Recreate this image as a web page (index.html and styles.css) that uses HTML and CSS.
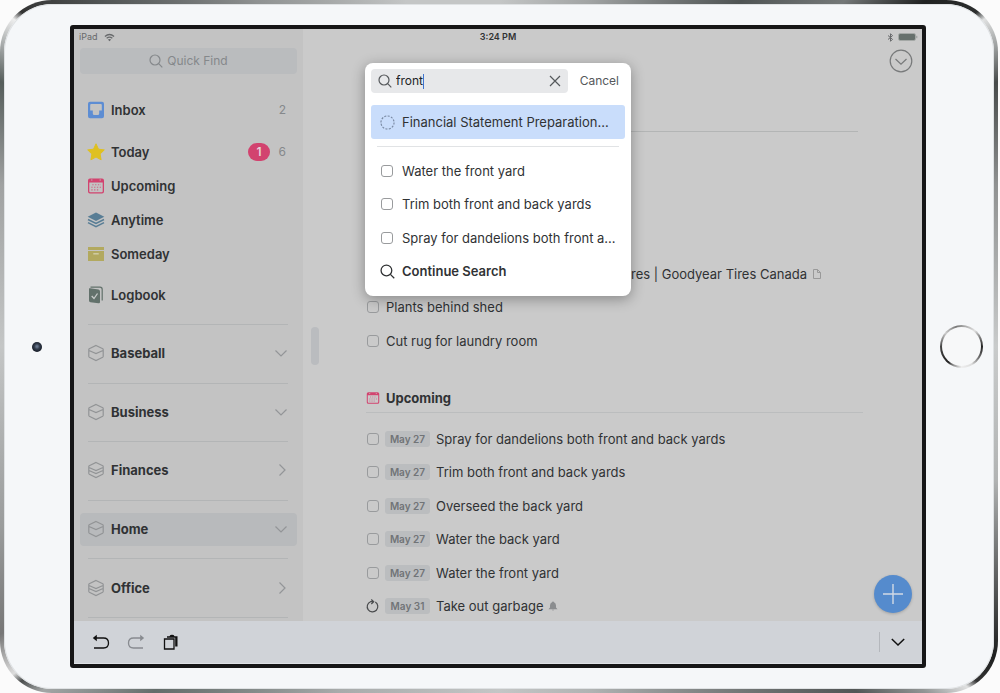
FILE: index.html
```html
<!DOCTYPE html>
<html lang="en">
<head>
<meta charset="utf-8">
<title>Quick Find</title>
<link rel="stylesheet" href="styles.css">
</head>
<body>
<svg class="defs" aria-hidden="true">
  <symbol id="search" viewBox="0 0 14 14"><circle cx="6" cy="6" r="5"/><path d="M9.7 9.7L13.3 13.3"/></symbol>
  <symbol id="down" viewBox="0 0 14 14"><path d="M1.5 4.5L7 10L12.500 4.500"/></symbol>
  <symbol id="right" viewBox="0 0 14 14"><path d="M5.500 1.500L11 7L5.500 12.500"/></symbol>
  <symbol id="area" viewBox="0 0 18 18"><path d="M9 1.500L15.800 4.800Q16.200 5 16.200 5.500V12.300Q16.200 12.900 15.700 13.200L9 16.500L2.300 13.200Q1.800 12.900 1.800 12.300V5.500Q1.800 5 2.200 4.800ZM2 6.500L9 9.500L16 6.500"/></symbol>
  <symbol id="area-full" viewBox="0 0 18 18"><path d="M9 1.500L15.800 4.800Q16.200 5 16.200 5.500V12.300Q16.200 12.900 15.700 13.200L9 16.500L2.300 13.200Q1.800 12.900 1.800 12.300V5.500Q1.800 5 2.200 4.800ZM2 6.500L9 9.500L16 6.500M2 9.500L9 12.500L16 9.500"/></symbol>
  <symbol id="calendar" viewBox="0 0 18 18"><path fill="currentColor" fill-rule="evenodd" d="M3 1.500H15Q17 1.500 17 3.500V14.500Q17 16.500 15 16.500H3Q1 16.500 1 14.500V3.500Q1 1.500 3 1.500ZM2.300 5.500V14.300Q2.300 15.200 3.200 15.200H14.800Q15.700 15.200 15.700 14.300V5.500ZM4.200 2.500V3.600H5.400V2.500ZM12.600 2.500V3.600H13.800V2.500Z"/><path stroke="currentColor" stroke-opacity=".75" stroke-width="1.100" stroke-dasharray="1.300 1.500" d="M5.300 7.700H14M4.300 10.300H14M4.300 12.900H11.500"/></symbol>
</svg>
<div class="device">
  <div class="face">
    <div class="bezel-left"><span class="camera"></span></div>
    <div class="screen">
      <div class="content">
        <nav class="sidebar">
          <div class="status">iPad
            <svg class="wifi" viewBox="0 0 12 9"><path d="M1 3.300Q6 -.8 11 3.300M2.900 5.300Q6 2.800 9.100 5.300" fill="none" stroke="currentColor" stroke-width="1.400"/><path d="M4.200 6.700Q6 5.300 7.800 6.700L6 8.600Z" fill="currentColor"/></svg>
          </div>
          <button class="quick-find"><svg class="icon"><use href="#search"/></svg>Quick Find</button>
          <ul class="lists">
            <li class="entry spaced">
              <svg class="list-icon" viewBox="0 0 18 18"><path fill="#5d8dd3" fill-rule="evenodd" d="M3 .8H15Q17 .8 17 2.800V15.200Q17 17.200 15 17.200H3Q1 17.200 1 15.200V2.800Q1 .8 3 .8ZM3.200 4V9.600H5.800V12.500Q5.800 14 7.300 14H10.700Q12.200 14 12.200 12.500V9.600H14.800V4Q14.800 3 13.800 3H4.200Q3.200 3 3.200 4Z"/></svg>
              <span class="name">Inbox</span><span class="count">2</span></li>
            <li class="entry">
              <svg class="list-icon" viewBox="0 0 18 18"><path fill="#dfc021" stroke="#dfc021" stroke-linejoin="round" d="M9 .8L11.500 6.200L17.300 6.900L13.100 11L14.100 16.800L9 14L3.900 16.800L4.900 11L.7 6.900L6.500 6.200Z"/></svg>
              <span class="name">Today</span><span class="badge">1</span><span class="count">6</span></li>
            <li class="entry"><svg class="list-icon pink"><use href="#calendar"/></svg><span class="name">Upcoming</span></li>
            <li class="entry">
              <svg class="list-icon" viewBox="0 0 18 18"><path fill="#587d95" d="M9 1.500L17.300 5.800L9 10L.7 5.800Z"/><path fill="none" stroke="#587d95" stroke-width="1.500" d="M1 8.500L9 12.500L17 8.500M1 11.700L9 15.700L17 11.700"/></svg>
              <span class="name">Anytime</span></li>
            <li class="entry">
              <svg class="list-icon" viewBox="0 0 18 18"><path fill="#b2a95f" d="M1 2H17V5H1ZM1 6H17V16H1Z"/><path stroke="#d3cfa9" stroke-width="1.400" d="M6.300 8.800H11.700"/></svg>
              <span class="name">Someday</span></li>
            <li class="entry logbook">
              <svg class="list-icon" viewBox="0 0 18 18"><path fill="#62716b" d="M2 2.500Q2 2 3 2.200L11.500 3.600Q13 4 13 5.500V16Q13 17.600 11.500 17.300L3.500 16.200Q2 16 2 14.500Z"/><path fill="none" stroke="#62716b" stroke-width="1.200" d="M3.500 1.200H13Q15.200 1.200 15.200 3.400V14.500"/><path fill="none" stroke="#c8cbca" stroke-width="1.300" d="M4.700 10L7 12.500L10.500 7.500"/></svg>
              <span class="name">Logbook</span></li>
          </ul>
          <ul class="areas">
            <li class="area"><div class="entry"><svg class="list-icon line"><use href="#area"/></svg><span class="name">Baseball</span><svg class="icon chev"><use href="#down"/></svg></div></li>
            <li class="area"><div class="entry"><svg class="list-icon line"><use href="#area"/></svg><span class="name">Business</span><svg class="icon chev"><use href="#down"/></svg></div></li>
            <li class="area"><div class="entry"><svg class="list-icon line"><use href="#area-full"/></svg><span class="name">Finances</span><svg class="icon chev"><use href="#right"/></svg></div></li>
            <li class="area"><div class="entry current"><svg class="list-icon line"><use href="#area"/></svg><span class="name">Home</span><svg class="icon chev"><use href="#down"/></svg></div></li>
            <li class="area"><div class="entry"><svg class="list-icon line"><use href="#area-full"/></svg><span class="name">Office</span><svg class="icon chev"><use href="#right"/></svg></div></li>
          </ul>
        </nav>
        <main class="main">
          <div class="status battery-status">
            <svg class="bluetooth" viewBox="0 0 7 9"><path d="M1 2.500L5.500 6.300L3.500 8.300V.7L5.500 2.700L1 6.500" fill="none" stroke="currentColor"/></svg>
            <svg class="battery" viewBox="0 0 20 8"><rect x=".5" y=".5" width="17" height="7" rx="1.500" fill="none" stroke="#a4a8a6"/><rect x="1" y="1" width="16" height="6" rx="1" fill="#66706c"/><path d="M18.800 2.800V5.200" stroke="#959a98"/></svg>
          </div>
          <button class="more" aria-label="More"><svg viewBox="0 0 24 24"><circle cx="12" cy="12" r="10.800"/><path d="M6.500 10L12 15.200L17.500 10"/></svg></button>
          <div class="page-head"></div>
          <ul class="tasks first">
            <li class="task link-task"><a class="title" href="#tires">Tires | Goodyear Tires Canada</a><svg class="mini" viewBox="0 0 10 12"><path d="M1.500 1.500H5.500L8.500 4.500V10.500H1.500ZM5.500 1.500V4.500H8.500" fill="none" stroke="#999" stroke-linejoin="round"/></svg></li>
            <li class="task"><label><input type="checkbox">Plants behind shed</label></li>
            <li class="task"><label><input type="checkbox">Cut rug for laundry room</label></li>
          </ul>
          <h2 class="section"><svg class="small-cal pink"><use href="#calendar"/></svg>Upcoming</h2>
          <ul class="tasks dated">
            <li class="task"><label><input type="checkbox"><span class="date">May 27</span>Spray for dandelions both front and back yards</label></li>
            <li class="task"><label><input type="checkbox"><span class="date">May 27</span>Trim both front and back yards</label></li>
            <li class="task"><label><input type="checkbox"><span class="date">May 27</span>Overseed the back yard</label></li>
            <li class="task"><label><input type="checkbox"><span class="date">May 27</span>Water the back yard</label></li>
            <li class="task"><label><input type="checkbox"><span class="date">May 27</span>Water the front yard</label></li>
            <li class="task"><svg class="repeat" viewBox="0 0 13 14"><path d="M9.300 3.100A5.300 5.300 0 1 1 4.500 2.700H7.500M5.300 .5L7.700 2.700L5.300 5" fill="none" stroke="#4a4c4e" stroke-width="1.200"/></svg><span class="date">May 31</span>Take out garbage<svg class="mini bell" viewBox="0 0 10 12"><path fill="#8b8d8f" d="M5 1.500Q6 1.500 6 2.300Q8 3 8 5.500V7.500L9.500 9.200H.5L2 7.500V5.500Q2 3 4 2.300Q4 1.500 5 1.500ZM3.700 9.800H6.300Q5 11.300 3.700 9.800Z"/></svg></li>
          </ul>
          <span class="handle"></span>
          <button class="add" aria-label="New To-Do"><svg viewBox="0 0 20 20"><path d="M10 0V20M0 10H20"/></svg></button>
        </main>
      </div>
      <div class="toolbar">
        <button aria-label="Undo"><svg viewBox="0 0 18 16"><path d="M2.500 4H11.500Q16.500 4 16.500 9T11.500 14H2" fill="none" stroke="#111" stroke-width="1.300"/><path d="M.8 4L4.800 .8V7.200Z" fill="#111"/></svg></button>
        <button aria-label="Redo" class="faded"><svg viewBox="0 0 18 16"><path d="M15.500 4H6.500Q1.500 4 1.500 9T6.500 14H16" fill="none" stroke="#888b90" stroke-width="1.300"/><path d="M17.200 4L13.200 .8V7.200Z" fill="#888b90"/></svg></button>
        <button aria-label="Paste"><svg viewBox="0 0 18 16"><path d="M2.500 5H12V15H2.500Z" fill="none" stroke="#111" stroke-width="1.300"/><path d="M5 3.800V2.200H7.500Q8 .8 10 .8T12.500 2.200H15.500V12.500H13.200V3.800Z" fill="#111"/></svg></button>
        <button aria-label="Hide keyboard" class="hide"><svg viewBox="0 0 14 14" class="icon"><path d="M.8 4L7 10L13.200 4" fill="none" stroke="#111" stroke-width="1.500"/></svg></button>
      </div>
      <time class="clock">3:24 PM</time>
      <div class="popover" role="dialog" aria-label="Quick Find">
        <div class="search-row">
          <div class="field">
            <svg class="icon"><use href="#search"/></svg>
            <input type="text" class="query" aria-label="Search" value="front"><span class="caret"></span>
            <button class="clear" aria-label="Clear"><svg viewBox="0 0 12 12"><path d="M1 1L11 11M11 1L1 11"/></svg></button>
          </div>
          <button class="cancel">Cancel</button>
        </div>
        <button class="result selected"><svg class="icon" viewBox="0 0 16 16"><circle cx="8" cy="8" r="7" fill="none" stroke="#7787a0" stroke-dasharray="2.200 1.460"/></svg>Financial Statement Preparation...</button>
        <hr>
        <div class="results">
          <label class="result"><input type="checkbox">Water the front yard</label>
          <label class="result"><input type="checkbox">Trim both front and back yards</label>
          <label class="result"><input type="checkbox">Spray for dandelions both front a...</label>
          <button class="result continue"><svg class="icon"><use href="#search"/></svg>Continue Search</button>
        </div>
      </div>
    </div>
    <div class="bezel-right"><button class="home" aria-label="Home"></button></div>
  </div>
</div>
</body>
</html>
```
FILE: styles.css
```css
* { box-sizing: border-box; }
body {
  margin: 0;
  background: #fbfbfb;
  color: #303234;
  font: 13px/20px Inter, "Liberation Sans", sans-serif;
}
ul { list-style: none; margin: 0; padding: 0; }
button { border: 0; padding: 0; background: none; color: inherit; font: inherit; }
svg { flex: none; }
.defs { position: absolute; width: 0; height: 0; }

/* Device body */
.device {
  height: 100vh;
  margin-right: 2px;
  padding: 4px;
  border-radius: 52px;
  background: conic-gradient(#c4c6c6 0deg, #a0a3a3 15deg, #4f5454 35deg, #747878 45deg, #202222 51deg, #2c2e2e 55deg, #e0e1e1 56deg, #999c9c 59deg, #484b4b 62deg, #909292 72deg, #c9cbcb 90deg, #b2b4b4 105deg, #555757 116deg, #1e1f1f 122deg, #333 125deg, #e0e1e1 126deg, #929595 129deg, #525656 134deg, #b0b3b3 165deg, #c4c6c6 180deg, #a8abab 205deg, #646d6b 225deg, #a3a6a6 233deg, #4c4f4f 235deg, #ddd 236deg, #777 240deg, #9a9c9c 250deg, #c4c6c6 270deg, #a0a2a2 288deg, #565e5c 298deg, #a0a4a4 301deg, #eee 304deg, #333 305deg, #515555 311deg, #8f9292 325deg, #c4c6c6 345deg, #c4c6c6 360deg);
}
.face {
  display: grid;
  grid-template-columns: 66px 1fr 68px;
  height: 100%;
  padding: 21px 0;
  border-radius: 48px;
  background: #f5f7f9;
  box-shadow: inset 0 0 0 1px #dfe2e4;
}
.bezel-left, .bezel-right { display: flex; align-items: center; justify-content: center; }
.camera {
  width: 10px; height: 10px;
  border-radius: 50%;
  background: radial-gradient(circle at 50% 45%, #66758b 0 10%, #343e4e 35%, #161c27 70%);
}
.home {
  width: 43px; height: 43px;
  margin-left: 3px;
  border: 2px solid transparent;
  border-radius: 50%;
  background:
    linear-gradient(#f7f8f9, #f7f8f9) padding-box,
    conic-gradient(#999, #e0e0e0 40deg, #777 65deg, #222 90deg, #777 125deg, #ddd 150deg, #eee 180deg, #888 205deg, #222 220deg, #444 270deg, #ccc 310deg, #777 345deg, #999 360deg) border-box;
}
.screen {
  position: relative;
  display: flex;
  flex-direction: column;
  min-height: 0;
  border: 4px solid #161617;
  border-radius: 3px;
  overflow: hidden;
}

/* Screen */
.content { flex: 1; display: flex; min-height: 0; background: #cacaca; }
.sidebar { width: 229px; padding: 0 6px; background: #c3c3c3; overflow: hidden; }
.main { position: relative; flex: 1; padding: 0 59px 0 63px; }
.status {
  display: flex;
  align-items: center;
  gap: 6px;
  height: 16px;
  color: #67696b;
  font-size: 9px;
}
.sidebar .status { margin-left: -1px; }
.wifi { width: 11px; height: 9px; }
.battery-status { justify-content: flex-end; margin-right: -55px; gap: 4px; }
.bluetooth { width: 7px; height: 9px; }
.battery { width: 20px; height: 8px; }
.clock {
  position: absolute;
  top: 0; left: 0; right: 0;
  line-height: 16px;
  text-align: center;
  font-size: 9px;
  font-weight: 600;
}
.icon { width: 14px; height: 14px; fill: none; stroke: currentColor; stroke-width: 1.2; }
.quick-find {
  display: flex;
  align-items: center;
  justify-content: center;
  gap: 4px;
  width: 100%;
  height: 26px;
  margin-top: 3px;
  border-radius: 4px;
  background: #babcbe;
  color: #85888b;
  font-size: 12px;
}
.lists { margin: 19px 0 13px; }
.entry {
  display: flex;
  align-items: center;
  height: 33px;
  padding: 0 10px 0 7px;
  border-radius: 4px;
  font-weight: 600;
}
.spaced { margin-bottom: 9px; }
.lists .entry + .entry { margin-bottom: 1px; }
.logbook { margin-top: 8px; }
.list-icon { width: 18px; height: 18px; margin-right: 6px; }
.name { flex: 1; }
.pink { color: #d2436f; fill: none; }
.line { fill: none; stroke: #929496; stroke-width: 1.2; }
.count { width: 20px; padding-right: 1px; text-align: right; color: #85888b; font-size: 12px; font-weight: 400; }
.badge {
  width: 22px;
  border-radius: 9px;
  background: #d2436f;
  color: #e6d3d9;
  line-height: 18px;
  font-size: 12px;
  text-align: center;
}
.lists .badge + .count { width: 17px; }
.areas { position: relative; display: grid; grid-auto-rows: 1fr; height: 293px; }
.area { display: flex; flex-direction: column; justify-content: center; position: relative; }
.area::before, .areas::after { content: ""; position: absolute; top: 0; left: 8px; right: 9px; border-top: 1px solid #b3b5b6; }
.areas::after { top: 100%; }
.current { background: #b8babc; }
.chev { color: #939598; }
.area .entry { padding-right: 9px; font-weight: 700; }

.more {
  position: absolute;
  top: 20px; right: 9px;
  width: 24px; height: 24px;
}
.more svg { display: block; fill: none; stroke: #77797a; stroke-width: 1.2; }
.page-head { height: 87px; margin-right: 5px; border-bottom: 1px solid #b3b5b5; }
.tasks { display: grid; grid-auto-rows: 1fr; }
.first { height: 101px; margin-top: 125px; }
.task, .task label { display: flex; align-items: center; white-space: nowrap; }
input[type="checkbox"] {
  flex: none;
  appearance: none;
  width: 12px; height: 12px;
  margin: 0 7px 0 1px;
  border: 1px solid #999b9d;
  border-radius: 3px;
}
.link-task { justify-content: flex-end; margin-right: 41px; gap: 5px; }
.title { color: inherit; text-decoration: none; }
.mini { width: 10px; height: 12px; }
.bell { margin-left: 4px; }
.section {
  display: flex;
  align-items: center;
  gap: 6px;
  height: 30px;
  margin: 25px 0 9px;
  border-bottom: 1px solid #bbbdbe;
  font-size: 13px;
  font-weight: 700;
}
.small-cal { width: 14px; height: 14px; }
.dated { height: 201px; }
.date {
  width: 45px;
  margin-right: 6px;
  border-radius: 3px;
  background: #bbbdbf;
  color: #717477;
  font-size: 10px;
  font-weight: 600;
  line-height: 16px;
  text-align: center;
}
.dated input { margin-right: 6px; }
.repeat { width: 13px; height: 14px; margin-right: 6px; }
.handle {
  position: absolute;
  top: 298px; left: 8px;
  width: 8px; height: 38px;
  border-radius: 4px;
  background: #babcbf;
}
.add {
  position: absolute;
  right: 10px; bottom: 8px;
  display: grid;
  place-items: center;
  width: 38px; height: 38px;
  border-radius: 50%;
  background: #558bcd;
  box-shadow: 0 1px 3px #0003;
}
.add svg { width: 20px; stroke: #d2dae5; stroke-width: 1.4; }

/* Keyboard shortcut bar */
.toolbar { display: flex; align-items: center; gap: 17px; height: 43px; padding: 0 17px 0 18px; background: #d0d3d8; border-bottom: 1px solid #dfe2e6; }
.toolbar svg { display: block; }
.toolbar button > svg:not(.icon) { width: 18px; height: 16px; }
.hide { margin-left: auto; padding: 3px 0 3px 11px; border-left: 1px solid #b4b7bc; }

/* Quick Find popover */
.popover {
  position: absolute;
  top: 34px; left: 50%;
  translate: -50%;
  width: 266px;
  padding: 6px 6px 8px;
  border-radius: 8px;
  background: #fff;
  box-shadow: 0 3px 14px #0005;
}
.search-row { display: flex; gap: 12px; }
.field {
  flex: 1;
  display: flex;
  align-items: center;
  height: 24px;
  padding: 0 7px;
  border-radius: 4px;
  background: #e7e8ea;
  color: #55585b;
}
.query {
  field-sizing: content;
  min-width: 0;
  max-width: 140px;
  margin-left: 4px;
  padding: 0;
  border: 0;
  outline: 0;
  background: none;
  color: #222426;
  font: inherit;
  font-size: 12px;
}
.caret { width: 1px; height: 15px; background: #3f74cf; }
.clear { margin-left: auto; }
.clear svg { display: block; width: 12px; fill: none; stroke: #55585b; stroke-width: 1.2; }
.cancel { padding-right: 6px; color: #55585b; font-size: 12px; }
.result {
  display: flex;
  align-items: center;
  width: 100%;
  padding-left: 9px;
  text-align: left;
  white-space: nowrap;
}
.result .icon { width: 15px; height: 15px; margin-right: 7px; }
.result input { margin-right: 9px; }
.selected { height: 34px; margin-top: 12px; border-radius: 3px; background: #c9ddfb; }
.popover hr { height: 1px; margin: 7px 6px; border: 0; background: #e1e3e5; }
.results { display: grid; grid-auto-rows: 1fr; height: 134px; }
.continue { font-weight: 600; }
```
